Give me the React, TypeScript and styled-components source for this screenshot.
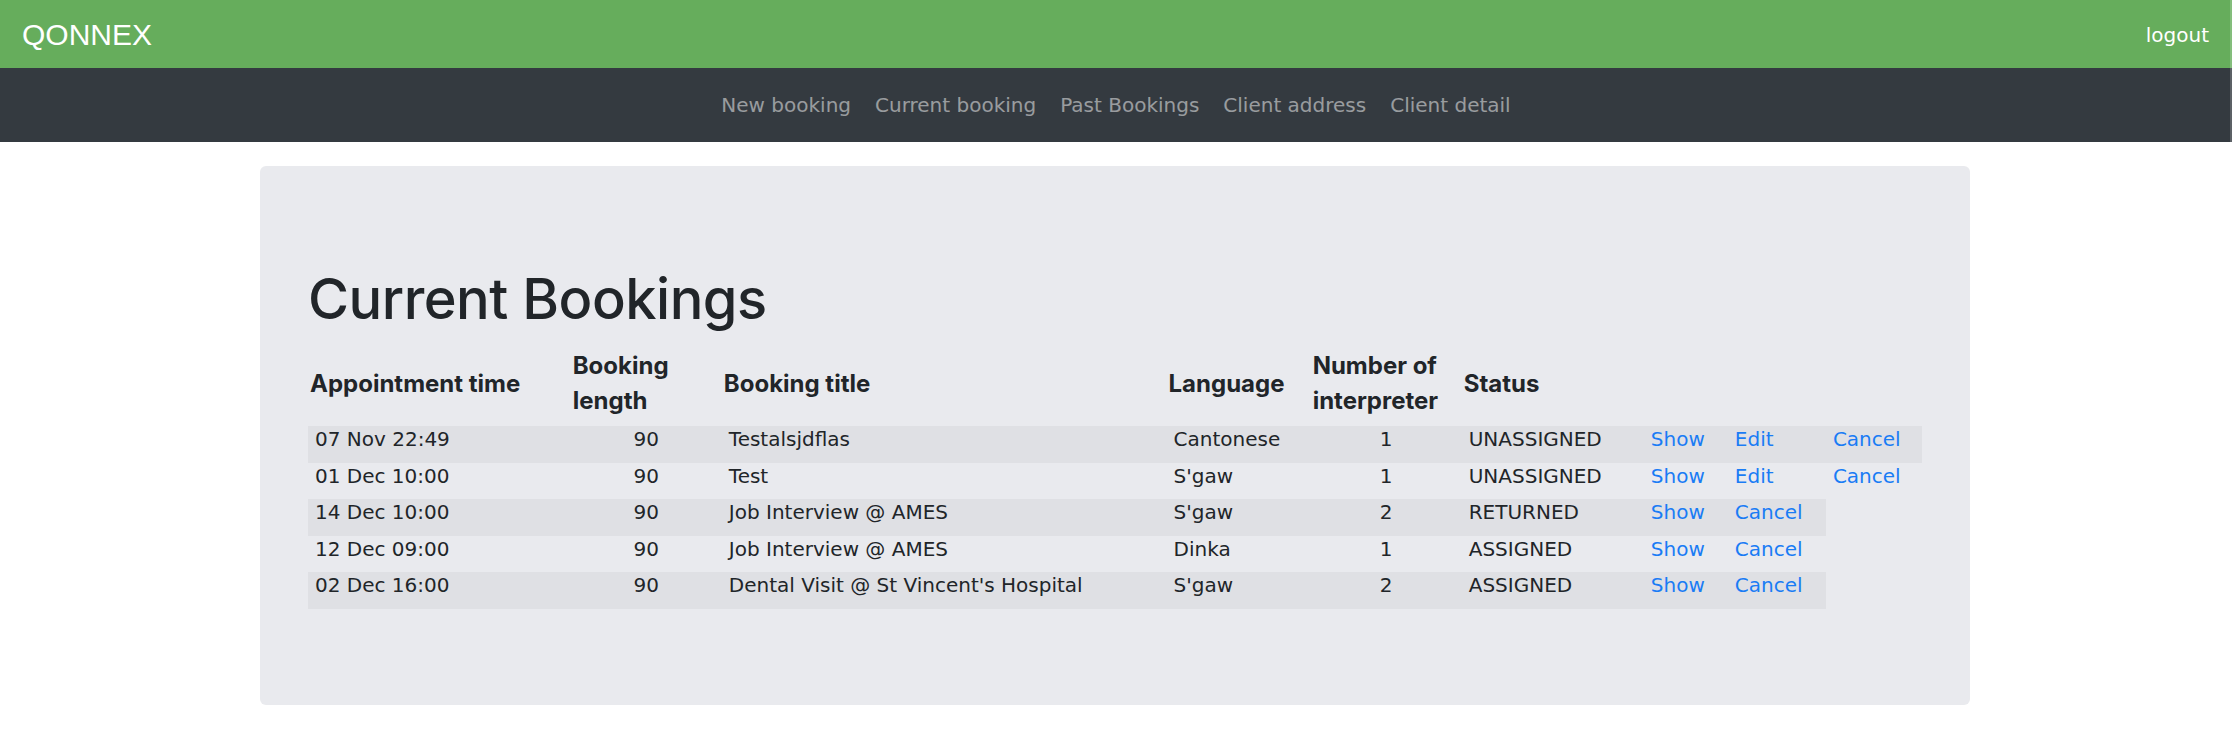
import React from 'react'
import styled, { createGlobalStyle } from 'styled-components'

interface Booking {
  time: string
  length: number
  title: string
  language: string
  interpreters: number
  status: string
  canEdit: boolean
}

const bookings: Booking[] = [
  {
    time: '07 Nov 22:49',
    length: 90,
    title: 'Testalsjdflas',
    language: 'Cantonese',
    interpreters: 1,
    status: 'UNASSIGNED',
    canEdit: true
  },
  {
    time: '01 Dec 10:00',
    length: 90,
    title: 'Test',
    language: "S'gaw",
    interpreters: 1,
    status: 'UNASSIGNED',
    canEdit: true
  },
  {
    time: '14 Dec 10:00',
    length: 90,
    title: 'Job Interview @ AMES',
    language: "S'gaw",
    interpreters: 2,
    status: 'RETURNED',
    canEdit: false
  },
  {
    time: '12 Dec 09:00',
    length: 90,
    title: 'Job Interview @ AMES',
    language: 'Dinka',
    interpreters: 1,
    status: 'ASSIGNED',
    canEdit: false
  },
  {
    time: '02 Dec 16:00',
    length: 90,
    title: "Dental Visit @ St Vincent's Hospital",
    language: "S'gaw",
    interpreters: 2,
    status: 'ASSIGNED',
    canEdit: false
  }
]

const navLinks = [
  'New booking',
  'Current booking',
  'Past Bookings',
  'Client address',
  'Client detail'
]

// widths of the table columns, last three are the action links
const columnWidths = [262.6, 151, 444.5, 144, 151, 182, 84, 98, 96]

export default function App() {
  return (
    <>
      <GlobalStyle />
      <TopBar>
        <Header>
          <Brand>QONNEX</Brand>
          <Logout href="#">logout</Logout>
        </Header>
        <Nav>
          {navLinks.map(link => (
            <NavLink key={link} href="#">
              {link}
            </NavLink>
          ))}
        </Nav>
      </TopBar>

      <Panel>
        <Heading>Current Bookings</Heading>
        <Table>
          <colgroup>
            {columnWidths.map((w, i) => (
              <Col key={i} $width={w} />
            ))}
          </colgroup>
          <thead>
            <tr>
              <Th>Appointment time</Th>
              <Th>Booking length</Th>
              <Th>Booking title</Th>
              <Th>Language</Th>
              <Th>Number of interpreter</Th>
              <Th>Status</Th>
              <Th />
              <Th />
              <Th />
            </tr>
          </thead>
          <tbody>
            {bookings.map((b, i) => (
              <Row key={i}>
                <Td>{b.time}</Td>
                <Td $center>{b.length}</Td>
                <Td>{b.title}</Td>
                <Td>{b.language}</Td>
                <Td $center>{b.interpreters}</Td>
                <Td>{b.status}</Td>
                <Td>
                  <Link href="#">Show</Link>
                </Td>
                {b.canEdit && (
                  <Td>
                    <Link href="#">Edit</Link>
                  </Td>
                )}
                <Td>
                  <Link href="#">Cancel</Link>
                </Td>
              </Row>
            ))}
          </tbody>
        </Table>
      </Panel>
    </>
  )
}

const GlobalStyle = createGlobalStyle`
  body {
    margin: 0;
    background: #fff;
    color: #212529;
    font-family: "DejaVu Sans", sans-serif;
  }
`

const TopBar = styled.div`
  position: relative;

  &::after {
    content: '';
    position: absolute;
    top: 0;
    right: 0;
    width: 2px;
    height: 100%;
    background: rgba(255, 255, 255, 0.2);
  }
`

const Header = styled.header`
  height: 68px;
  background-color: #66ad5c;
  display: flex;
  align-items: center;
  justify-content: space-between;
  padding: 0 23px 0 22px;
`

const Brand = styled.div`
  font-family: "Liberation Sans", Arial, sans-serif;
  font-size: 30px;
  line-height: 45px;
  color: #fff;
`

const Logout = styled.a`
  font-size: 20px;
  line-height: 30px;
  color: #fff;
  text-decoration: none;
  margin-top: 2px;
`

const Nav = styled.nav`
  height: 74px;
  background-color: #343a40;
  display: flex;
  align-items: center;
  justify-content: center;
`

const NavLink = styled.a`
  padding: 0 12px;
  font-size: 20px;
  line-height: 30px;
  color: rgba(255, 255, 255, 0.5);
  text-decoration: none;
`

const Panel = styled.main`
  width: 1710px;
  margin: 24px 0 0 260px;
  padding: 100px 48px 96px;
  box-sizing: border-box;
  background-color: #e9eaee;
  border-radius: 6px;
`

const Heading = styled.h1`
  margin: 0;
  font-family: Inter, sans-serif;
  font-size: 56px;
  font-weight: 500;
  letter-spacing: -0.5px;
  line-height: 1.2;
  color: #212529;
`

const Table = styled.table`
  width: 100%;
  table-layout: fixed;
  border-collapse: collapse;
`

const Col = styled.col<{ $width: number }>`
  width: ${p => p.$width}px;
`

const Th = styled.th`
  padding: 15px 2px 8px;
  font-family: Inter, sans-serif;
  font-size: 24px;
  font-weight: 700;
  line-height: 35px;
  text-align: left;
  vertical-align: middle;
  color: #212529;
`

const Row = styled.tr`
  &:nth-child(odd) td {
    background-color: #dfe0e4;
  }
`

const Td = styled.td<{ $center?: boolean }>`
  padding: 1px 7px 11.5px;
  font-size: 20px;
  line-height: 24px;
  vertical-align: top;
  text-align: ${p => (p.$center ? 'center' : 'left')};
  color: #212529;
  white-space: nowrap;
`

const Link = styled.a`
  color: #1a7cf5;
  text-decoration: none;
`
